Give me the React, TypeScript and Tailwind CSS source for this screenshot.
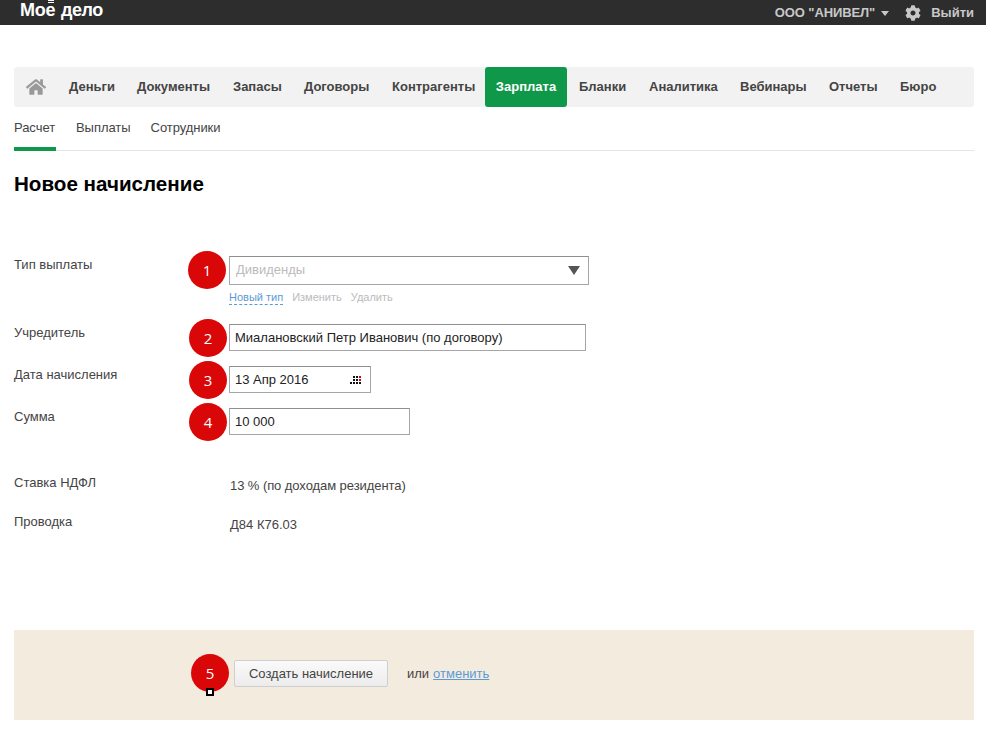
import { FaCog, FaHome } from "react-icons/fa";

const navItems = [
  { label: "Деньги", width: "w-[68px]" },
  { label: "Документы", width: "w-[96px]" },
  { label: "Запасы", width: "w-[71px]" },
  { label: "Договоры", width: "w-[88px]" },
  { label: "Контрагенты", width: "w-[93px]" },
];

const navItemsRight = [
  { label: "Бланки", width: "w-[70px]" },
  { label: "Аналитика", width: "w-[91px]" },
  { label: "Вебинары", width: "w-[89px]" },
  { label: "Отчеты", width: "w-[71px]" },
  { label: "Бюро", width: "w-[60px]" },
];

const Badge = ({ n, className }: { n: number; className: string }) => (
  <div
    className={`absolute flex h-[38px] w-[38px] items-center justify-center rounded-full bg-[#d90707] font-['Open_Sans'] text-[15px] text-white ${className}`}
  >
    {n}
  </div>
);

const CalendarDots = () => (
  <svg width="11" height="8" viewBox="0 0 11 8" className="block">
    <rect x="3" y="0" width="2" height="2" fill="#111" />
    <rect x="6" y="0" width="2" height="2" fill="#111" />
    <rect x="9" y="0" width="2" height="2" fill="#d90707" />
    <rect x="3" y="3" width="2" height="2" fill="#111" />
    <rect x="6" y="3" width="2" height="2" fill="#111" />
    <rect x="9" y="3" width="2" height="2" fill="#d90707" />
    <rect x="0" y="6" width="2" height="2" fill="#111" />
    <rect x="3" y="6" width="2" height="2" fill="#111" />
    <rect x="6" y="6" width="2" height="2" fill="#111" />
    <rect x="9" y="6" width="2" height="2" fill="#111" />
  </svg>
);

const inputBox =
  "flex items-center border border-[#a6a6a6] border-t-[#8f8f8f] bg-white pl-[5px] pr-[9px] text-[13px] text-[#222]";

export default function App() {
  return (
    <div className="relative h-[733px] w-[986px] overflow-hidden bg-white font-['Liberation_Sans',Arial,sans-serif] text-[13px] text-[#444]">
      <header className="flex h-[25px] items-center justify-between bg-[#2d2d2d] pl-[20px] pr-[12px]">
        <div className="flex items-baseline pb-[4px] text-[18px] font-bold leading-[21px] text-white">
          <span className="relative tracking-[-0.3px]">
            Мое
            <span className="absolute right-[1px] top-[0px] h-[1px] w-[6px] bg-white" />
            <span className="absolute right-[1px] top-[2px] h-[1px] w-[6px] bg-white" />
          </span>
          <span className="ml-[6px] tracking-[-0.5px]">дело</span>
        </div>
        <div className="flex items-center text-[13px] font-bold text-[#c8c8c8]">
          <span className="tracking-[-0.1px]">ООО "АНИВЕЛ"</span>
          <span className="ml-[6px] mt-[2px] h-0 w-0 border-x-[4px] border-t-[5px] border-x-transparent border-t-[#c8c8c8]" />
          <FaCog className="ml-[16px] text-[16px]" />
          <span className="ml-[10px]">Выйти</span>
        </div>
      </header>

      <div className="pl-[14px] pr-[12px]">
        <nav className="mt-[42px] flex h-[40px] items-center rounded-[3px] bg-[#f2f2f2] text-[13px] font-bold text-[#444]">
          <div className="flex w-[55px] justify-start pl-[12px]">
            <FaHome className="text-[20px] text-[#999]" />
          </div>
          {navItems.map((item) => (
            <div key={item.label} className={item.width}>
              {item.label}
            </div>
          ))}
          <div className="flex h-[40px] w-[82px] items-center justify-center rounded-[3px] bg-[#0f9849] text-white">
            Зарплата
          </div>
          <div className="flex pl-[12px]">
            {navItemsRight.map((item) => (
              <div key={item.label} className={item.width}>
                {item.label}
              </div>
            ))}
          </div>
        </nav>

        <div className="flex h-[44px] gap-[20px] border-b border-[#e5e5e5] text-[13px] tracking-[-0.05px] text-[#444]">
          <div className="flex h-[44px] w-[42px] items-start border-b-[4px] border-[#0f9849] pt-[11px]">Расчет</div>
          <div className="pt-[11px]">Выплаты</div>
          <div className="pt-[11px]">Сотрудники</div>
        </div>

        <h1 className="mt-[21px] text-[20.6px] font-bold leading-[23px] text-black">Новое начисление</h1>

        {/* form */}
        <div className="mt-[61px] flex">
          <div className="w-[215px] leading-[18px]">Тип выплаты</div>
          <div className="relative">
            <Badge n={1} className="left-[-41px] top-[-5px]" />
            <div className="flex h-[29px] w-[360px] items-center justify-between border border-[#a6a6a6] border-t-[#8f8f8f] bg-white pl-[6px] pr-[8px] text-[13px] text-[#bbb]">
              <span className="pb-[1px]">Дивиденды</span>
              <span className="h-0 w-0 border-x-[6px] border-t-[9px] border-x-transparent border-t-[#555]" />
            </div>
            <div className="mt-[5px] flex gap-[9px] text-[11px] leading-[14px] text-[#bbb]">
              <span className="border-b border-dashed border-[#5b9bd5] text-[#5b9bd5]">Новый тип</span>
              <span>Изменить</span>
              <span>Удалить</span>
            </div>
          </div>
        </div>

        <div className="mt-[19px] flex">
          <div className="w-[215px] leading-[18px]">Учредитель</div>
          <div className="relative">
            <Badge n={2} className="left-[-40px] top-[-5px]" />
            <div className={`${inputBox} h-[27px] w-[357px]`}>Миалановский Петр Иванович (по договору)</div>
          </div>
        </div>

        <div className="mt-[15px] flex">
          <div className="w-[215px] leading-[18px]">Дата начисления</div>
          <div className="relative">
            <Badge n={3} className="left-[-40px] top-[-5px]" />
            <div className={`${inputBox} h-[27px] w-[142px] justify-between`}>
              <span>13 Апр 2016</span>
              <CalendarDots />
            </div>
          </div>
        </div>

        <div className="mt-[15px] flex">
          <div className="w-[215px] leading-[18px]">Сумма</div>
          <div className="relative">
            <Badge n={4} className="left-[-40px] top-[-5px]" />
            <div className={`${inputBox} h-[27px] w-[181px]`}>10 000</div>
          </div>
        </div>

        <div className="mt-[39px] flex">
          <div className="w-[216px] leading-[18px]">Ставка НДФЛ</div>
          <div className="pt-[3px] leading-[18px] tracking-[-0.07px]">13 % (по доходам резидента)</div>
        </div>
        <div className="mt-[18px] flex">
          <div className="w-[216px] leading-[18px]">Проводка</div>
          <div className="pt-[3px] leading-[18px]">Д84 К76.03</div>
        </div>

        {/* footer */}
        <div className="mt-[96px] flex h-[90px] items-start bg-[#f4ebdf] pl-[220px] pt-[30px]">
          <div className="relative">
            <Badge n={5} className="left-[-43px] top-[-6px]" />
            <div className="absolute left-[-28px] top-[28px] h-[8px] w-[8px] border-[2px] border-black bg-white" />
            <div className="flex h-[27px] w-[154px] items-center justify-center rounded-[2px] border border-[#cfcfcf] bg-gradient-to-b from-[#fafafa] to-[#ececec] text-[13px] text-[#444]">
              Создать начисление
            </div>
          </div>
          <span className="ml-[19px] leading-[27px]">или</span>
          <span className="ml-[4px] leading-[27px] text-[#5b9bd5] underline">отменить</span>
        </div>
      </div>
    </div>
  );
}
